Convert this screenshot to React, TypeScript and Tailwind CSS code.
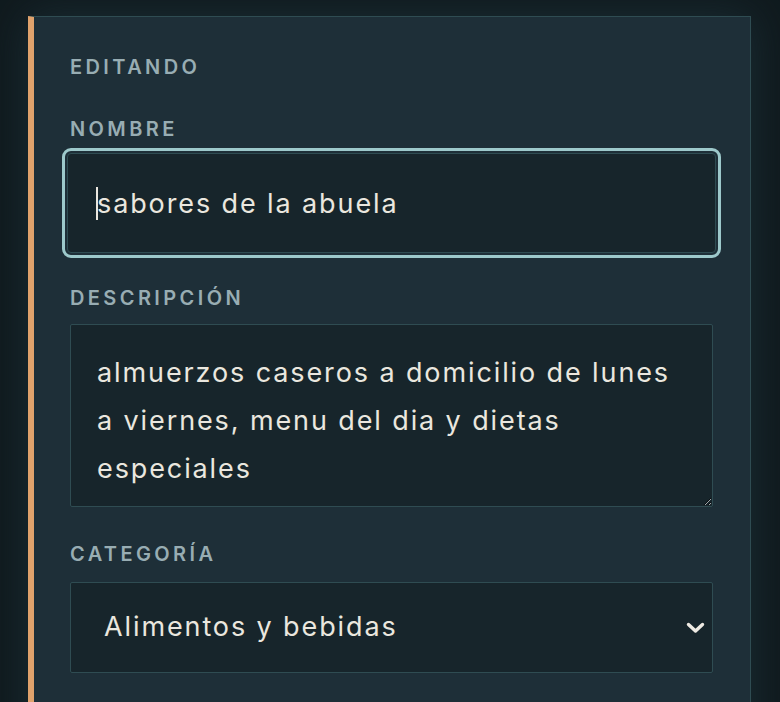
import { useState } from "react";

const labelCls =
  "block font-['Inter',sans-serif] text-[20px] leading-[28px] font-semibold tracking-[0.17em] uppercase text-[#98adb3]";

const App = () => {
  const [nombre, setNombre] = useState("sabores de la abuela");
  const [descripcion, setDescripcion] = useState(
    "almuerzos caseros a domicilio de lunes a viernes, menu del dia y dietas especiales"
  );
  const [categoria, setCategoria] = useState("alimentos");

  return (
    <div className="h-[702px] overflow-hidden bg-[#101a1e] pt-[16px] pl-[28px] pr-[29px] font-['Inter',sans-serif]">
      <div className="bg-[#1e2f38] border-l-[6px] border-l-[#e0a26c] border-t border-r border-t-[#2f4c52] border-r-[#2f4c52] pl-[36px] pr-[37px] pt-[36px] pb-[80px] shadow-[0_0_40px_rgba(32,54,62,0.7)]">
        <p className={labelCls}>Editando</p>

        {/* Nombre */}
        <label className={`${labelCls} mt-[34px]`}>Nombre</label>
        <div className="relative mt-[10px] -mx-[3px]">
          <input
            value={nombre}
            onChange={(e) => setNombre(e.target.value)}
            className="w-full h-[100px] rounded-[4px] bg-[#17252b] border border-[#2f4c52] pl-[29px] pr-4 text-[27px] tracking-[0.07em] text-[#eae7df] caret-transparent outline-[3px] outline-solid outline-[#9dc9cb] outline-offset-[2px]"
          />
          {/* caret */}
          <span className="absolute left-[29px] top-[34px] w-[2px] h-[33px] bg-[#eae7df]" />
        </div>

        {/* Descripción */}
        <label className={`${labelCls} mt-[31px]`}>Descripción</label>
        <textarea
          value={descripcion}
          onChange={(e) => setDescripcion(e.target.value)}
          className="block mt-[12px] w-full h-[183px] rounded-[2px] bg-[#17252b] border border-[#2f4c52] pl-[26px] pr-[34px] pt-[24px] text-[27px] tracking-[0.07em] leading-[48px] text-[#eae7df] outline-none"
        />

        {/* Categoría */}
        <label className={`${labelCls} mt-[33px]`}>Categoría</label>
        <div className="relative mt-[14px]">
          <select
            value={categoria}
            onChange={(e) => setCategoria(e.target.value)}
            className="appearance-none w-full h-[91px] rounded-[2px] bg-[#17252b] border border-[#2f4c52] pl-[33px] pr-12 text-[27px] tracking-[0.07em] text-[#eae7df] outline-none"
          >
            <option value="alimentos">Alimentos y bebidas</option>
            <option value="servicios">Servicios</option>
            <option value="otros">Otros</option>
          </select>
          <svg
            className="pointer-events-none absolute right-[8px] top-[40px] w-[19px] h-[12px]"
            viewBox="0 0 19 12"
            fill="none"
          >
            <path d="M2.5 2.5 L9.5 9 L16.5 2.5" stroke="#eeeae3" strokeWidth="3.4" strokeLinecap="round" strokeLinejoin="round" />
          </svg>
        </div>
      </div>
    </div>
  );
};

export default App;
